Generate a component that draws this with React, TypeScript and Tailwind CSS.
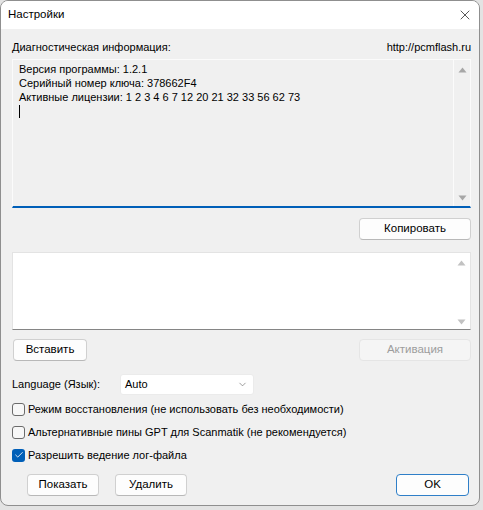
import React from "react";
import { X, ChevronDown, Check } from "lucide-react";

const font = "font-['Liberation_Sans',Arial,sans-serif]";

const Arrow = ({ up, color }: { up?: boolean; color: string }) => (
  <svg width="9" height="6" viewBox="0 0 9 6" className="block">
    {up ? (
      <path d="M4.5 0.5 L8.5 5.5 L0.5 5.5 Z" fill={color} />
    ) : (
      <path d="M0.5 0.5 L8.5 0.5 L4.5 5.5 Z" fill={color} />
    )}
  </svg>
);

const Button = ({
  children,
  className = "",
  disabled,
  primary,
}: {
  children: React.ReactNode;
  className?: string;
  disabled?: boolean;
  primary?: boolean;
}) => (
  <button
    className={
      "flex h-[22px] items-center justify-center rounded-[4px] border text-[11.5px] " +
      (disabled
        ? "border-[#e5e5e5] bg-[#f5f5f5] text-[#9d9d9d] "
        : primary
          ? "border-[#2f7fc8] bg-[#fdfdfd] text-black "
          : "border-[#d0d0d0] border-b-[#b8b8b8] bg-[#fdfdfd] text-black ") +
      className
    }
  >
    {children}
  </button>
);

const CheckRow = ({ label, checked }: { label: string; checked?: boolean }) => (
  <div className="flex h-[14px] items-center">
    {checked ? (
      <div className="flex h-[13px] w-[13px] items-center justify-center rounded-[3px] bg-[#005fb8]">
        <Check size={10} strokeWidth={2} color="#ffffff" />
      </div>
    ) : (
      <div className="h-[13px] w-[13px] rounded-[3px] border border-[#6b6b6b] bg-[#f7f7f7]" />
    )}
    <span className="ml-[3px] text-[11px] text-black">{label}</span>
  </div>
);

const App = () => {
  return (
    <div className={"h-[510px] w-[483px] bg-[#e3e3e3] " + font}>
      <div className="flex h-[506px] w-[480px] flex-col overflow-hidden rounded-[8px] border border-[#8f8f8f] bg-[#f0f0f0]">
        {/* title bar */}
        <div className="flex h-[28px] shrink-0 items-center justify-between bg-white pl-[7px] pr-[6px]">
          <span className="text-[11.5px] text-black">Настройки</span>
          <X size={16} strokeWidth={1.1} color="#1a1a1a" />
        </div>

        <div className="flex flex-col pl-[11px] pr-[8px]">
          <div className="mt-[11px] flex h-[14px] items-center justify-between text-[11px] text-black">
            <span>Диагностическая информация:</span>
            <span>http://pcmflash.ru</span>
          </div>

          {/* diagnostic box */}
          <div className="mt-[5px] flex h-[149px] border border-b-2 border-[#fbfbfb] border-b-[#005fb8] bg-[#f0f0f0]">
            <div className="flex-1 px-[6px] pt-[2px] text-[11px] leading-[14px] text-black">
              <div>Версия программы: 1.2.1</div>
              <div>Серийный номер ключа: 378662F4</div>
              <div>Активные лицензии: 1 2 3 4 6 7 12 20 21 32 33 56 62 73</div>
              <div className="mt-[1px] h-[13px] w-[1px] bg-black" />
            </div>
            <div className="flex w-[17px] flex-col items-center justify-between border-l border-[#fbfbfb] pb-[5px] pt-[7px]">
              <Arrow up color="#a6a6a6" />
              <Arrow color="#a6a6a6" />
            </div>
          </div>

          <div className="mt-[10px] flex justify-end">
            <Button className="w-[112px]">Копировать</Button>
          </div>

          {/* activation box */}
          <div className="mt-[12px] flex h-[78px] border border-[#e3e3e3] border-b-[#858585] bg-white">
            <div className="flex-1" />
            <div className="flex w-[17px] flex-col items-center justify-between pb-[4px] pt-[7px]">
              <Arrow up color="#c2c2c2" />
              <Arrow color="#c2c2c2" />
            </div>
          </div>

          <div className="mt-[9px] flex justify-between">
            <Button className="ml-[1px] w-[74px]">Вставить</Button>
            <Button disabled className="w-[112px]">
              Активация
            </Button>
          </div>

          {/* language */}
          <div className="mt-[13px] flex items-center">
            <span className="w-[108px] text-[11px] text-black">Language (Язык):</span>
            <div className="flex h-[21px] w-[134px] items-center justify-between rounded-[3px] border border-[#ebebeb] bg-white pl-[4px] pr-[5px]">
              <span className="text-[11px] text-black">Auto</span>
              <ChevronDown size={11} strokeWidth={1.3} color="#5d5d5d" />
            </div>
          </div>

          <div className="mt-[7px] flex flex-col gap-[9px]">
            <CheckRow label="Режим восстановления (не использовать без необходимости)" />
            <CheckRow label="Альтернативные пины GPT для Scanmatik (не рекомендуется)" />
            <CheckRow label="Разрешить ведение лог-файла" checked />
          </div>

          <div className="mt-[12px] flex items-center">
            <Button className="ml-[15px] w-[72px]">Показать</Button>
            <Button className="ml-[16px] w-[72px]">Удалить</Button>
            <Button primary className="ml-auto mr-[2px] w-[73px]">
              OK
            </Button>
          </div>
        </div>
      </div>
    </div>
  );
};

export default App;
